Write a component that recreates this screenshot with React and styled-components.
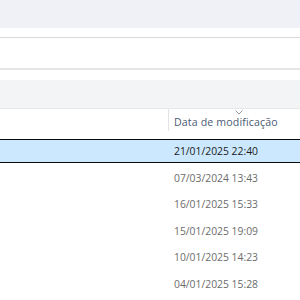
import styled, { createGlobalStyle } from "styled-components";

const GlobalStyle = createGlobalStyle`
  html, body {
    margin: 0;
    padding: 0;
    background: #ffffff;
    overflow: hidden;
  }
  body {
    font-family: "Open Sans", "Noto Sans", "Liberation Sans", sans-serif;
  }
`;

const Window = styled.div`
  width: 300px;
  height: 300px;
  display: flex;
  flex-direction: column;
  overflow: hidden;
`;

const TitleBand = styled.div`
  height: 28px;
  background: #eff1f7;
`;

const CommandBar = styled.div`
  height: 30px;
  margin-top: 9px;
  border-top: 1px solid #d9d9d9;
  border-bottom: 2px solid #e6e6e6;
`;

const DetailsBand = styled.div`
  height: 28px;
  margin-top: 10px;
  background: #f3f4f6;
  border-bottom: 1px solid #e8e8e8;
`;

const HeaderRow = styled.div`
  display: grid;
  grid-template-columns: 168px 140px;
  height: 30px;
`;

const HeaderCell = styled.div`
  position: relative;
  border-left: ${(p) => (p.$divider ? "1px solid #e3e3e3" : "none")};
  height: 22px;
  padding: 6px 0 0 5px;
  box-sizing: border-box;
  font-size: 10.6px;
  letter-spacing: 0.15px;
  color: #4a5b74;
  white-space: nowrap;
`;

const SortArrow = styled.svg`
  position: absolute;
  top: 1px;
  left: 66px;
`;

const List = styled.div`
  display: flex;
  flex-direction: column;
  gap: 2.6px;
  margin: 0 -1px;
`;

const Row = styled.div`
  display: grid;
  grid-template-columns: 169px 140px;
  height: 24px;
  box-sizing: border-box;
  border: 1px solid ${(p) => (p.$selected ? "#0a0a0a" : "transparent")};
  background: ${(p) => (p.$selected ? "#cce8ff" : "transparent")};
  align-items: center;
`;

const DateCell = styled.div`
  padding-left: 5px;
  font-size: 10.35px;
  color: ${(p) => (p.$selected ? "#1b1b1b" : "#6b6b6b")};
  white-space: nowrap;
`;

const dates = [
  "21/01/2025 22:40",
  "07/03/2024 13:43",
  "16/01/2025 15:33",
  "15/01/2025 19:09",
  "10/01/2025 14:23",
  "04/01/2025 15:28",
];

export default function App() {
  return (
    <Window>
      <GlobalStyle />
      <TitleBand />
      <CommandBar />
      <DetailsBand />
      <HeaderRow>
        <div />
        <HeaderCell $divider>
          <SortArrow width="8" height="5" viewBox="0 0 8 5">
            <polyline
              points="0.5,0.5 4,4 7.5,0.5"
              fill="none"
              stroke="#9a9a9a"
              strokeWidth="1"
            />
          </SortArrow>
          Data de modificação
        </HeaderCell>
      </HeaderRow>
      <List>
        {dates.map((d, i) => (
          <Row key={d} $selected={i === 0}>
            <div />
            <DateCell $selected={i === 0}>{d}</DateCell>
          </Row>
        ))}
      </List>
    </Window>
  );
}
